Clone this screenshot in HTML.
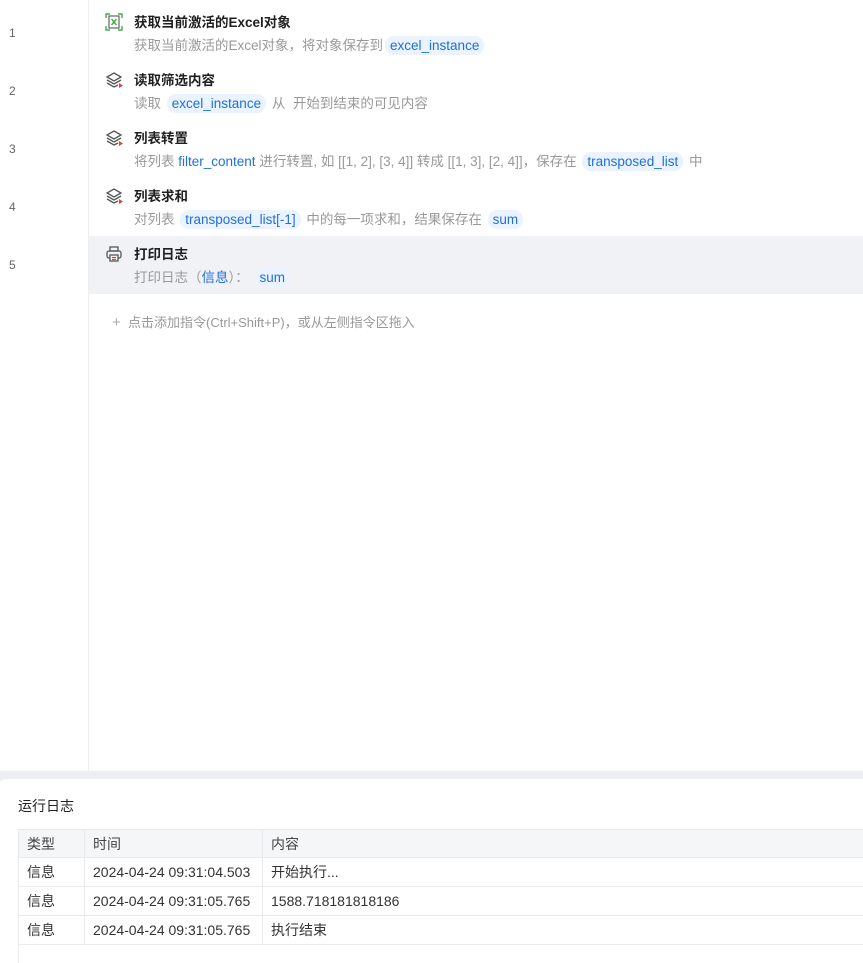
<!DOCTYPE html>
<html><head><meta charset="utf-8"><style>
*{margin:0;padding:0;box-sizing:border-box}
body{width:863px;height:961px;background:#fff;font-family:"Liberation Sans","Noto Sans CJK SC",sans-serif;position:relative;overflow:hidden;color:#333}
.gut{position:absolute;left:88px;top:0;width:1px;height:771px;background:#eceef2}
.num{position:absolute;left:9px;font-size:12px;color:#666}
.row{position:absolute;left:89px;width:774px;height:58px}
.row.sel{background:#f1f2f5}
.ic{position:absolute;left:16px;top:5px;width:18px;height:18px}
.t{position:absolute;left:45px;top:3px;font-size:13.5px;font-weight:bold;color:#1f1f1f}
.d{position:absolute;left:45px;top:26px;font-size:13.5px;color:#999;white-space:nowrap}
.v{color:#1f6fe0}
.tag{display:inline-block;background:#eaf3ff;color:#1f6fe0;border-radius:9px;padding:0 5px;line-height:19px;margin:0 2px}
.add{position:absolute;left:112px;top:312px;font-size:13px;color:#999}
.strip{position:absolute;left:0;top:771px;width:863px;height:10px;background:#eceef1}
.panel{position:absolute;left:0;top:779px;width:863px;height:182px;background:#fff;border-top-left-radius:6px}
.ptitle{position:absolute;left:18px;top:796px;font-size:14px;color:#222}
table{position:absolute;left:18px;top:829px;width:850px;border-collapse:collapse;font-size:14px;color:#333}
td{border:1px solid #e8eaee;height:29px;padding:0 8px}
tr.h td{background:#f5f6f8;height:28px;color:#444}
.last td{height:18px;border-bottom:none}
</style></head><body>
<div class="gut"></div>
<div class="num" style="top:26px">1</div>
<div class="num" style="top:84px">2</div>
<div class="num" style="top:142px">3</div>
<div class="num" style="top:200px">4</div>
<div class="num" style="top:258px">5</div>

<div class="row" style="top:8px">
<svg class="ic" viewBox="0 0 18 18" fill="none" stroke-width="1.4"><path d="M1 5V1H5M13 1H17V5M17 13V17H13M5 17H1V13" stroke="#3bb14a"/><rect x="4" y="3" width="10" height="12" stroke="#555" stroke-width="1.1"/><path d="M6.5 6l5 6M11.5 6l-5 6" stroke="#3bb14a"/></svg>
<div class="t">获取当前激活的Excel对象</div>
<div class="d">获取当前激活的Excel对象，将对象保存到<span class="tag">excel_instance</span></div></div>

<div class="row" style="top:66px">
<svg class="ic" viewBox="0 0 18 18" fill="none" stroke="#555" stroke-width="1.3"><path d="M9 2L16 6L9 10L2 6Z"/><path d="M2 9L9 13L16 9"/><path d="M2 12L9 16L13 14"/><path d="M14 12l4 2.5-4 2.5z" fill="#e8403a" stroke="none"/></svg>
<div class="t">读取筛选内容</div>
<div class="d">读取 <span class="tag">excel_instance</span> 从 &nbsp;开始到结束的可见内容</div></div>

<div class="row" style="top:124px">
<svg class="ic" viewBox="0 0 18 18" fill="none" stroke="#555" stroke-width="1.3"><path d="M9 2L16 6L9 10L2 6Z"/><path d="M2 9L9 13L16 9"/><path d="M2 12L9 16L13 14"/><path d="M14 12l4 2.5-4 2.5z" fill="#e8403a" stroke="none"/></svg>
<div class="t">列表转置</div>
<div class="d">将列表 <span class="v">filter_content</span> 进行转置, 如 [[1, 2], [3, 4]] 转成 [[1, 3], [2, 4]]，保存在 <span class="tag">transposed_list</span> 中</div></div>

<div class="row" style="top:182px">
<svg class="ic" viewBox="0 0 18 18" fill="none" stroke="#555" stroke-width="1.3"><path d="M9 2L16 6L9 10L2 6Z"/><path d="M2 9L9 13L16 9"/><path d="M2 12L9 16L13 14"/><path d="M14 12l4 2.5-4 2.5z" fill="#e8403a" stroke="none"/></svg>
<div class="t">列表求和</div>
<div class="d">对列表 <span class="tag">transposed_list[-1]</span> 中的每一项求和，结果保存在 <span class="tag">sum</span></div></div>

<div class="row sel" style="top:236px;height:58px">
<svg class="ic" style="top:9px" viewBox="0 0 18 18" fill="none" stroke="#555" stroke-width="1.3"><rect x="5" y="2" width="8" height="4"/><rect x="2" y="6" width="14" height="7" rx="2"/><rect x="5" y="10" width="8" height="6" fill="#fff"/><path d="M7 12.5h4M7 14.5h4" stroke="#e8403a"/></svg>
<div class="t" style="top:7px">打印日志</div>
<div class="d" style="top:30px">打印日志（<span class="v">信息</span>）： <span class="tag">sum</span></div></div>

<div class="add"><span style="font-size:15px;color:#aaa">+</span>&nbsp; 点击添加指令(Ctrl+Shift+P)，或从左侧指令区拖入</div>

<div class="strip"></div>
<div class="panel"></div>
<div class="ptitle">运行日志</div>
<table>
<tr class="h"><td style="width:66px">类型</td><td style="width:178px">时间</td><td>内容</td></tr>
<tr><td>信息</td><td>2024-04-24 09:31:04.503</td><td>开始执行...</td></tr>
<tr><td>信息</td><td>2024-04-24 09:31:05.765</td><td>1588.718181818186</td></tr>
<tr><td>信息</td><td>2024-04-24 09:31:05.765</td><td>执行结束</td></tr>
<tr class="last"><td colspan="3"></td></tr>
</table>
</body></html>
